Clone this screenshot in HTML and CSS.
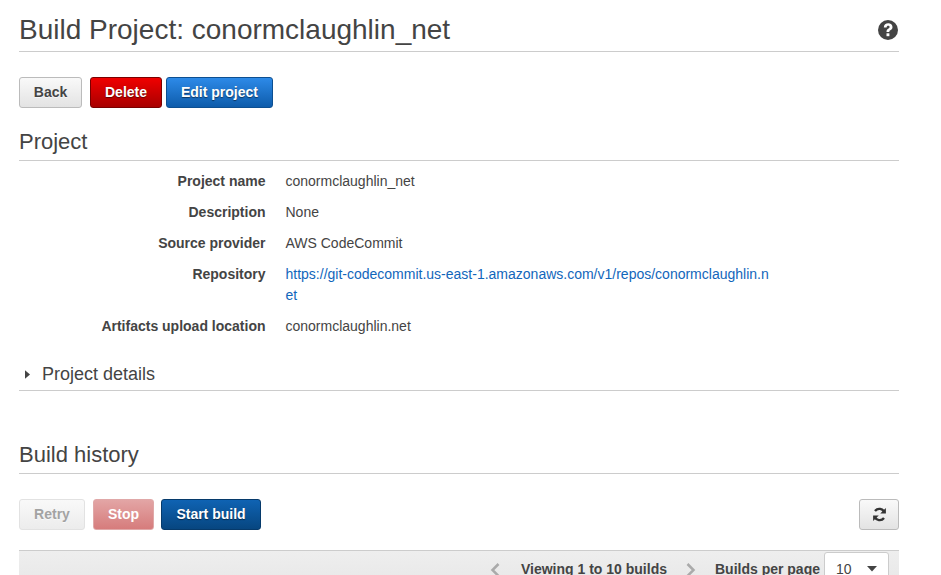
FILE: index.html
```html
<!DOCTYPE html>
<html lang="en">
<head>
<meta charset="utf-8">
<title>Build Project</title>
<link rel="stylesheet" href="styles.css">
</head>
<body>
<main class="page">
  <header class="title-row">
    <h1 class="title">Build Project: conormclaughlin_net</h1>
    <svg class="help" viewBox="0 0 20 20" width="20" height="20" aria-label="Help">
      <circle cx="10" cy="10" r="10" fill="#444"/>
      <path d="M5.800 7.400C5.900 4.800 7.800 3.300 10.200 3.300c2.500 0 4.300 1.500 4.300 3.600 0 1.700-.9 2.600-2.100 3.300-.9.500-1.100.9-1.100 1.800H8.500c0-1.800.5-2.600 1.700-3.300 1-.6 1.400-1.100 1.400-1.700 0-.8-.6-1.200-1.400-1.200-1 0-1.500.5-1.600 1.600z" fill="#fff"/>
      <rect x="8.500" y="13.300" width="2.900" height="2.900" fill="#fff"/>
    </svg>
  </header>
  <div class="actions actions-top">
    <button class="btn btn-default btn-back">Back</button>
    <button class="btn btn-danger btn-delete">Delete</button>
    <button class="btn btn-primary btn-edit">Edit project</button>
  </div>
  <h2 class="section">Project</h2>
  <dl class="details">
    <div class="row"><dt>Project name</dt><dd>conormclaughlin_net</dd></div>
    <div class="row"><dt>Description</dt><dd>None</dd></div>
    <div class="row"><dt>Source provider</dt><dd>AWS CodeCommit</dd></div>
    <div class="row"><dt>Repository</dt><dd><a href="#">https://git-codecommit.us-east-1.amazonaws.com/v1/repos/conormclaughlin.net</a></dd></div>
    <div class="row"><dt>Artifacts upload location</dt><dd>conormclaughlin.net</dd></div>
  </dl>
  <div class="expander">
    <svg class="caret" viewBox="0 0 6 10" width="5" height="9"><path d="M0 0l6 5-6 5z" fill="#444"/></svg>
    <span>Project details</span>
  </div>
  <h2 class="section section-history">Build history</h2>
  <div class="toolbar">
    <div class="actions">
      <button class="btn btn-default btn-retry" disabled>Retry</button>
      <button class="btn btn-danger btn-stop" disabled>Stop</button>
      <button class="btn btn-dark btn-start">Start build</button>
    </div>
    <button class="btn btn-default btn-refresh" aria-label="Refresh">
      <svg viewBox="0 0 16 16" width="15" height="15">
        <path d="M13.300 5.900A5.800 5.800 0 0 0 3.200 4.300" fill="none" stroke="#333" stroke-width="2.500"/>
        <path d="M14.800 1v6h-6z" fill="#333"/>
        <path d="M2.700 10.100A5.800 5.800 0 0 0 12.800 11.700" fill="none" stroke="#333" stroke-width="2.500"/>
        <path d="M1.200 15V9h6z" fill="#333"/>
      </svg>
    </button>
  </div>
  <div class="pager">
    <svg class="chev" viewBox="0 0 10 14" width="10" height="14"><path d="M8.500 1L2.500 7l6 6" fill="none" stroke="#aaa" stroke-width="2.500"/></svg>
    <span class="pager-text">Viewing 1 to 10 builds</span>
    <svg class="chev chev-next" viewBox="0 0 10 14" width="10" height="14"><path d="M1.500 1l6 6-6 6" fill="none" stroke="#aaa" stroke-width="2.500"/></svg>
    <span class="pager-text">Builds per page</span>
    <div class="select"><span>10</span><svg viewBox="0 0 10 6" width="10" height="6"><path d="M0 0h10L5 5.500z" fill="#444"/></svg></div>
  </div>
</main>
</body>
</html>
```
FILE: styles.css
```css
html, body {
  margin: 0;
  height: 575px;
  overflow: hidden;
  background: #fff;
}
body {
  font-family: "Liberation Sans", Arial, sans-serif;
  font-size: 14px;
  color: #444;
}
.page {
  width: 880px;
  margin-left: 19px;
}
.title-row {
  display: flex;
  justify-content: space-between;
  align-items: center;
  height: 51px;
  padding-top: 8px;
  margin-top: -8px;
  border-bottom: 1px solid #ccc;
}
.title {
  margin: 8px 0 0;
  font-size: 28px;
  font-weight: 400;
  line-height: 30px;
}
.help {
  margin: 9px 1px 0 0;
}
.actions {
  display: flex;
}
.actions-top {
  margin-top: 25px;
}
.btn {
  height: 31px;
  box-sizing: border-box;
  padding: 0;
  border-radius: 3px;
  border: 1px solid #bbb;
  font-family: inherit;
  font-size: 14px;
  font-weight: 700;
  line-height: 29px;
}
.btn-default {
  color: #444;
  background: linear-gradient(#f9f9f9, #e3e3e3);
  text-shadow: 0 1px 0 rgba(255, 255, 255, .6);
}
.btn-danger {
  color: #fff;
  background: linear-gradient(#f00000, #a80000);
  border-color: #7a0000;
  text-shadow: 0 1px 1px rgba(0, 0, 0, .5);
}
.btn-primary {
  color: #fff;
  background: linear-gradient(#2d8ae8, #0e5cab);
  border-color: #0d4f91;
  text-shadow: 0 1px 1px rgba(0, 0, 0, .5);
}
.btn-dark {
  color: #fff;
  background: linear-gradient(#0f63b3, #074680);
  border-color: #063a6b;
  text-shadow: 0 1px 1px rgba(0, 0, 0, .5);
}
.btn-back { width: 63px; margin-right: 8px; }
.btn-delete { width: 72px; margin-right: 4px; }
.btn-edit { width: 107px; }
.btn-retry {
  width: 66px;
  margin-right: 8px;
  color: #a3a3a3;
  border-color: #e2e2e2;
  background: linear-gradient(#f9f9f9, #ececec);
}
.btn-stop {
  width: 61px;
  margin-right: 7px;
  color: #fff;
  border-color: #e0a8a8;
  background: linear-gradient(#e3a5a5, #d67c7c);
  text-shadow: none;
}
.btn-start { width: 100px; }
.btn-refresh {
  width: 40px;
  display: flex;
  align-items: center;
  justify-content: center;
}
.section {
  margin: 0;
  font-size: 22px;
  font-weight: 400;
  line-height: 26px;
  border-bottom: 1px solid #ccc;
}
.actions-top + .section {
  margin-top: 21px;
  padding-bottom: 5px;
}
.details {
  margin: 5px 0 0;
}
.row {
  display: flex;
  padding: 5px 0;
}
.row dt {
  width: 246.5px;
  font-weight: 700;
  text-align: right;
  line-height: 21px;
}
.row dd {
  width: 484px;
  margin: 0 0 0 20px;
  line-height: 21px;
  word-break: break-all;
}
.row a {
  color: #1166bb;
  text-decoration: none;
}
.expander {
  display: flex;
  align-items: center;
  margin-top: 16px;
  height: 32px;
  font-size: 18px;
  border-bottom: 1px solid #ccc;
}
.caret {
  margin: 0 12px 0 6px;
}
.section-history {
  margin-top: 51px;
  padding-bottom: 5px;
}
.toolbar {
  display: flex;
  justify-content: space-between;
  margin-top: 25px;
}
.pager {
  display: flex;
  align-items: flex-start;
  justify-content: flex-end;
  box-sizing: border-box;
  height: 60px;
  margin-top: 20px;
  padding: 1px 10px 0 0;
  border-top: 1px solid #ccc;
  background: linear-gradient(#eee, #e3e3e3);
  font-weight: 700;
}
.pager-text {
  line-height: 34px;
}
.chev {
  margin: 11px 21px 0 0;
}
.chev-next {
  margin: 11px 19px 0 19px;
}
.select {
  display: flex;
  align-items: center;
  justify-content: space-between;
  box-sizing: border-box;
  width: 65px;
  height: 36px;
  margin-left: 4px;
  padding: 0 11px 2px 11px;
  background: #fff;
  border: 1px solid #ccc;
  border-radius: 3px;
  font-weight: 400;
}
```
